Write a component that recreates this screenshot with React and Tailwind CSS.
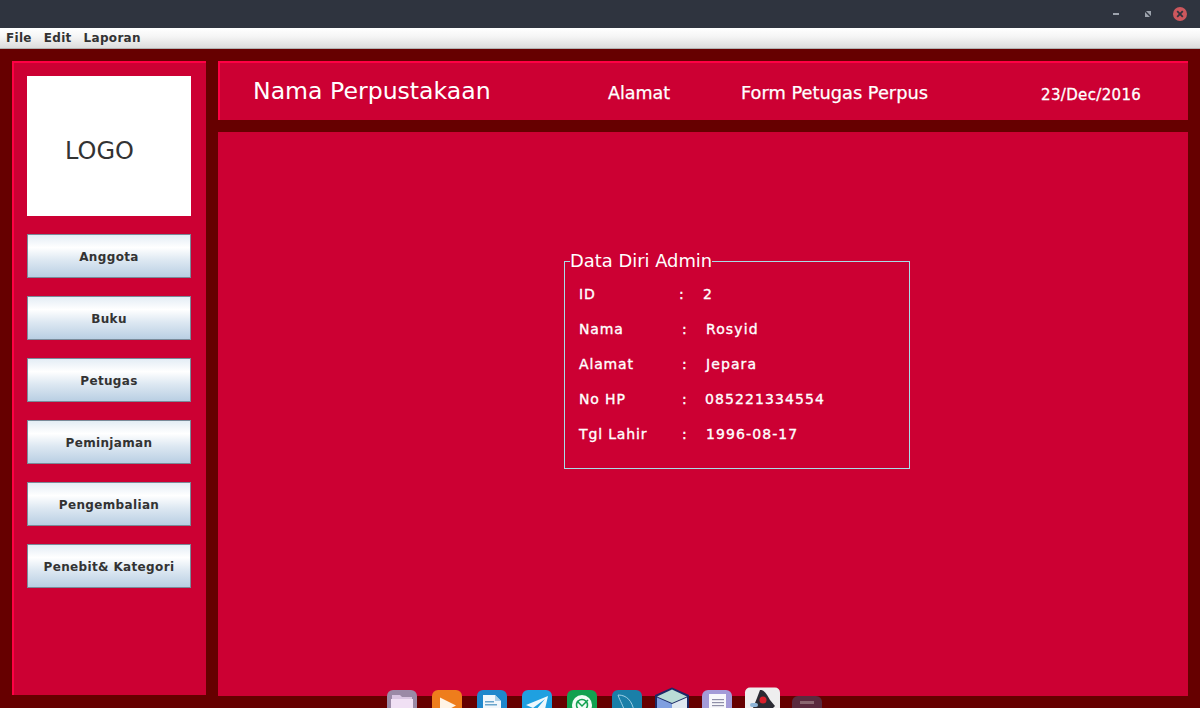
const F = '[font-family:"DejaVu_Sans",sans-serif]';

function Btn({ children }) {
  return (
    <button className="h-11 w-[164px] shrink-0 border border-[#7a8a99] bg-[linear-gradient(180deg,#e4edf5_0%,#ffffff_30%,#dde8f2_60%,#b9cfe3_100%)] pt-[2px] text-[12px] font-bold tracking-[0.35px] text-[#333333] [font-family:'DejaVu_Sans',sans-serif]">
      {children}
    </button>
  );
}

const rows = [
  { k: "ID", w: "w-[100px]", c: "w-[24px]", v: "2" },
  { k: "Nama", w: "w-[103px]", c: "w-[24px]", v: "Rosyid" },
  { k: "Alamat", w: "w-[103px]", c: "w-[24px]", v: "Jepara" },
  { k: "No HP", w: "w-[103px]", c: "w-[23px]", v: "085221334554" },
  { k: "Tgl Lahir", w: "w-[103px]", c: "w-[24px]", v: "1996-08-17" },
];

function Dock() {
  return (
    <div className="absolute bottom-0 left-[387px] flex h-[22px] items-start overflow-hidden">
      <svg width="440" height="22" viewBox="0 0 440 22">
        {/* folder */}
        <rect x="0" y="4" width="30" height="30" rx="6" fill="#9a8aa6" />
        <path d="M5 9 h8 l2 2 h10 v22 h-20z" fill="#d9c6e2" />
        <rect x="4" y="13" width="22" height="20" fill="#f0e0f4" />
        {/* play */}
        <rect x="45" y="4" width="30" height="30" rx="6" fill="#ee7d1c" />
        <path d="M53 11.5 L69 19.5 L53 28z" fill="#fff4e6" />
        {/* doc */}
        <rect x="90" y="4" width="30" height="30" rx="6" fill="#1f87cc" />
        <path d="M96 9 h12 l6 6 v20 h-18z" fill="#f0f6fb" />
        <path d="M108 9 l6 6 h-6z" fill="#a9cfe8" />
        <rect x="98" y="15" width="9" height="1.5" fill="#6aa5cc" />
        <rect x="98" y="18" width="12" height="1.5" fill="#6aa5cc" />
        {/* telegram */}
        <rect x="135" y="4" width="30" height="30" rx="6" fill="#1fa0e0" />
        <path d="M139 19 L161 10 L156 32 L149 24 L158 13 L146 22z" fill="#eef8fd" />
        {/* green */}
        <rect x="180" y="4" width="30" height="30" rx="6" fill="#12a150" />
        <circle cx="195" cy="19" r="10" fill="#f2fbf6" />
        <circle cx="195" cy="19" r="5.5" fill="none" stroke="#12a150" strokeWidth="1.5" />
        <path d="M190 15 L195 20 L201 14" fill="none" stroke="#12a150" strokeWidth="1.5" />
        {/* mysql */}
        <rect x="225" y="4" width="30" height="30" rx="6" fill="#1a7fa8" />
        <path d="M231 9 C240 9 245 15 247 25 M231 9 C233 15 236 19 239 29" fill="none" stroke="#9fd0e6" strokeWidth="1" />
        {/* cube */}
        <path d="M285 1.5 L302 9 V34 H268 V9z" fill="#1b2a66" />
        <path d="M285 3.5 L300 10.5 L285 17 L270 10.5z" fill="#b9dcd6" />
        <path d="M270 11.5 L285 18 V34 H270z" fill="#7f9fe0" />
        <path d="M300 11.5 L285 18 V34 H300z" fill="#dfe8f0" />
        {/* text */}
        <rect x="315" y="4" width="30" height="30" rx="6" fill="#a39bd8" />
        <rect x="322" y="8" width="17" height="26" fill="#f7f7fb" />
        <rect x="325" y="13" width="12" height="1.2" fill="#8f8fa8" />
        <rect x="325" y="16" width="12" height="1.2" fill="#8f8fa8" />
        <rect x="325" y="19" width="12" height="1.2" fill="#8f8fa8" />
        {/* java duke */}
        <rect x="358" y="1.5" width="35" height="34" rx="5" fill="#eeeeee" />
        <path d="M373 4 C378 4 380 9 383 14 L388 20 L386 22 H366 L370 12z" fill="#2b2b33" />
        <circle cx="376" cy="14" r="3.5" fill="#d9202c" />
        <rect x="363" y="17" width="8" height="4" rx="2" fill="#8fb6d8" />
        {/* dim */}
        <rect x="405" y="10" width="30" height="26" rx="6" fill="#5a2a3e" />
        <rect x="413" y="15" width="14" height="3" fill="#8a6670" />
      </svg>
    </div>
  );
}

export default function App() {
  return (
    <div className={`relative flex h-[708px] w-[1200px] flex-col overflow-hidden bg-[#660000] ${F}`}>
      <div className="flex h-7 shrink-0 items-center justify-end bg-[#2f343f]">
        <span className="mr-[26px] h-[2px] w-[6px] bg-[#9da3ad]" />
        <svg className="mr-[22px]" width="6" height="6" viewBox="0 0 6 6">
          <path d="M1 0H6V5zM0 1 5 6H0z" fill="#9da3ad" />
        </svg>
        <span className="mr-[13px] flex h-[14px] w-[14px] items-center justify-center rounded-full bg-[#cc575d]">
          <svg width="8" height="8" viewBox="0 0 8 8">
            <path d="M1.2 1.2 6.8 6.8M6.8 1.2 1.2 6.8" stroke="#2f343f" strokeWidth="1.8" />
          </svg>
        </span>
      </div>

      <div className="flex h-[21px] shrink-0 items-center gap-3 border-b border-[#b0b0b0] bg-[linear-gradient(180deg,#ffffff_0%,#f6f6f6_40%,#dcdcdc_100%)] pl-[6px] text-[12px] font-bold tracking-[0.3px] text-[#333333]">
        <span>File</span>
        <span>Edit</span>
        <span>Laporan</span>
      </div>

      <div className="flex flex-1 gap-3 p-3">
        <aside className="mb-[1px] flex w-[194px] shrink-0 flex-col items-center gap-[18px] border-t-2 border-l-2 border-[#ff0044] bg-[#cc0033] pt-[13px] pr-[2px]">
          <div className="flex h-[140px] w-[164px] shrink-0 items-center bg-white pt-[10px] pl-[38px] text-[24px] text-[#333333]">
            LOGO
          </div>
          <Btn>Anggota</Btn>
          <Btn>Buku</Btn>
          <Btn>Petugas</Btn>
          <Btn>Peminjaman</Btn>
          <Btn>Pengembalian</Btn>
          <Btn>Penebit&amp; Kategori</Btn>
        </aside>

        <div className="flex min-w-0 flex-1 flex-col gap-3">
          <header className="flex h-[59px] shrink-0 items-center border-t-2 border-l-2 border-[#ff0044] bg-[#cc0033] text-white">
            <span className="ml-[33px] w-[355px] text-[23.6px] leading-none">Nama Perpustakaan</span>
            <span className="w-[133px] pt-[3px] text-[17.5px] [-webkit-text-stroke:0.25px_white]">Alamat</span>
            <span className="w-[300px] pt-[3px] text-[17.8px] [-webkit-text-stroke:0.25px_white]">Form Petugas Perpus</span>
            <span className="pt-[7px] text-[15px] tracking-[0.35px] [-webkit-text-stroke:0.3px_white]">23/Dec/2016</span>
          </header>

          <main className="flex-1 bg-[#cc0033] pt-[119px] pl-[346px]">
            <fieldset className="h-[218px] w-[346px] border border-[#a8dce8] pl-[5px] text-white">
              <legend className="text-[17.9px] leading-[20px] text-white">Data Diri Admin</legend>
              <div className="mt-[13px] flex flex-col gap-[15px] pl-[9px] text-[14px] leading-5 tracking-[0.85px] [-webkit-text-stroke:0.35px_white]">
                {rows.map((r) => (
                  <div key={r.k} className="flex">
                    <span className={r.w}>{r.k}</span>
                    <span className={r.c}>:</span>
                    <span className="tracking-[1.1px]">{r.v}</span>
                  </div>
                ))}
              </div>
            </fieldset>
          </main>
        </div>
      </div>

      <Dock />
    </div>
  );
}
